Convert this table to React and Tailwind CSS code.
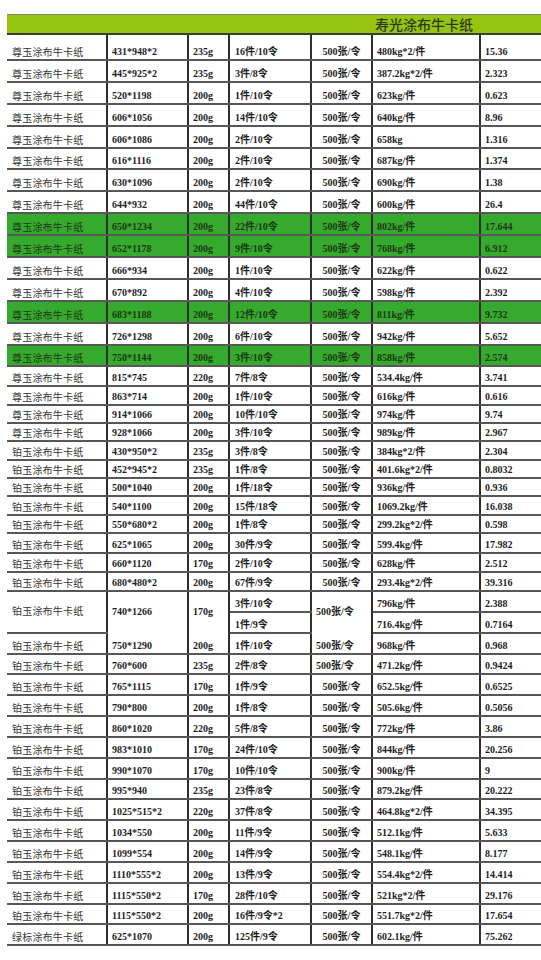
import React from "react";
import clsx from "clsx";

const A = "h-[21.9px]";
const B = "h-[18.3px]";
const C = "h-[20.84px]";

// name, size, gsm, count, kg, total, height, green
const top = [
  ["尊玉涂布牛卡纸", "431*948*2", "235g", "16件/10令", "480kg*2/件", "15.36", "h-[26px]"],
  ["尊玉涂布牛卡纸", "445*925*2", "235g", "3件/8令", "387.2kg*2/件", "2.323", A],
  ["尊玉涂布牛卡纸", "520*1198", "200g", "1件/10令", "623kg/件", "0.623", A],
  ["尊玉涂布牛卡纸", "606*1056", "200g", "14件/10令", "640kg/件", "8.96", A],
  ["尊玉涂布牛卡纸", "606*1086", "200g", "2件/10令", "658kg", "1.316", A],
  ["尊玉涂布牛卡纸", "616*1116", "200g", "2件/10令", "687kg/件", "1.374", A],
  ["尊玉涂布牛卡纸", "630*1096", "200g", "2件/10令", "690kg/件", "1.38", A],
  ["尊玉涂布牛卡纸", "644*932", "200g", "44件/10令", "600kg/件", "26.4", A],
  ["尊玉涂布牛卡纸", "650*1234", "200g", "22件/10令", "802kg/件", "17.644", A, true],
  ["尊玉涂布牛卡纸", "652*1178", "200g", "9件/10令", "768kg/件", "6.912", A, true],
  ["尊玉涂布牛卡纸", "666*934", "200g", "1件/10令", "622kg/件", "0.622", A],
  ["尊玉涂布牛卡纸", "670*892", "200g", "4件/10令", "598kg/件", "2.392", A],
  ["尊玉涂布牛卡纸", "683*1188", "200g", "12件/10令", "811kg/件", "9.732", A, true],
  ["尊玉涂布牛卡纸", "726*1298", "200g", "6件/10令", "942kg/件", "5.652", A],
  ["尊玉涂布牛卡纸", "750*1144", "200g", "3件/10令", "858kg/件", "2.574", A, true],
  ["尊玉涂布牛卡纸", "815*745", "220g", "7件/8令", "534.4kg/件", "3.741", "h-[20px]"],
  ["尊玉涂布牛卡纸", "863*714", "200g", "1件/10令", "616kg/件", "0.616", B],
  ["尊玉涂布牛卡纸", "914*1066", "200g", "10件/10令", "974kg/件", "9.74", B],
  ["尊玉涂布牛卡纸", "928*1066", "200g", "3件/10令", "989kg/件", "2.967", B],
  ["铂玉涂布牛卡纸", "430*950*2", "235g", "3件/8令", "384kg*2/件", "2.304", B],
  ["铂玉涂布牛卡纸", "452*945*2", "235g", "1件/8令", "401.6kg*2/件", "0.8032", B],
  ["铂玉涂布牛卡纸", "500*1040", "200g", "1件/18令", "936kg/件", "0.936", B],
  ["铂玉涂布牛卡纸", "540*1100", "200g", "15件/18令", "1069.2kg/件", "16.038", B],
  ["铂玉涂布牛卡纸", "550*680*2", "200g", "1件/8令", "299.2kg*2/件", "0.598", B],
  ["铂玉涂布牛卡纸", "625*1065", "200g", "30件/9令", "599.4kg/件", "17.982", "h-[20px]"],
  ["铂玉涂布牛卡纸", "660*1120", "170g", "2件/10令", "628kg/件", "2.512", "h-[19.3px]"],
  ["铂玉涂布牛卡纸", "680*480*2", "200g", "67件/9令", "293.4kg*2/件", "39.316", "h-[19px]"],
];

const bottom = [
  ["铂玉涂布牛卡纸", "760*600", "235g", "2件/8令", "471.2kg/件", "0.9424", C, false, true],
  ["铂玉涂布牛卡纸", "765*1115", "170g", "1件/9令", "652.5kg/件", "0.6525", C],
  ["铂玉涂布牛卡纸", "790*800", "200g", "1件/8令", "505.6kg/件", "0.5056", C],
  ["铂玉涂布牛卡纸", "860*1020", "220g", "5件/8令", "772kg/件", "3.86", C],
  ["铂玉涂布牛卡纸", "983*1010", "170g", "24件/10令", "844kg/件", "20.256", C],
  ["铂玉涂布牛卡纸", "990*1070", "170g", "10件/10令", "900kg/件", "9", C],
  ["铂玉涂布牛卡纸", "995*940", "235g", "23件/8令", "879.2kg/件", "20.222", C],
  ["铂玉涂布牛卡纸", "1025*515*2", "220g", "37件/8令", "464.8kg*2/件", "34.395", C],
  ["铂玉涂布牛卡纸", "1034*550", "200g", "11件/9令", "512.1kg/件", "5.633", C],
  ["铂玉涂布牛卡纸", "1099*554", "200g", "14件/9令", "548.1kg/件", "8.177", C],
  ["铂玉涂布牛卡纸", "1110*555*2", "200g", "13件/9令", "554.4kg*2/件", "14.414", C],
  ["铂玉涂布牛卡纸", "1115*550*2", "170g", "28件/10令", "521kg*2/件", "29.176", C],
  ["铂玉涂布牛卡纸", "1115*550*2", "200g", "16件/9令*2", "551.7kg*2/件", "17.654", C],
  ["绿标涂布牛卡纸", "625*1070", "200g", "125件/9令", "602.1kg/件", "75.262", C],
];

const cell = "p-0 pb-[1px] align-bottom leading-[12px] whitespace-nowrap overflow-hidden";
const hb = "border-b-2 border-b-[#575757]";
const vr = "border-r-2 border-r-[#2f2f2f]";
const cjk = "font-['Noto_Sans_CJK_SC',sans-serif] text-[10px] tracking-[0.2px] pl-[5px]";
const num = "font-['Liberation_Serif','Noto_Sans_CJK_SC',serif] font-bold text-[10px]";

function Row({ r }) {
  const [name, size, gsm, count, kg, total, h, green, leftReam] = r;
  return (
    <tr className={clsx(h, green ? "bg-[#36a92f] text-[#1c3a12]" : "text-[#1e1e1e]")}>
      <td className={clsx(cell, hb, vr, cjk, !green && "text-[#333]")}>{name}</td>
      <td className={clsx(cell, hb, vr, num, "pl-[4px]")}>{size}</td>
      <td className={clsx(cell, hb, vr, num, "pl-[4px]")}>{gsm}</td>
      <td className={clsx(cell, hb, vr, num, "pl-[5px]")}>{count}</td>
      <td className={clsx(cell, hb, vr, num, leftReam ? "pl-[4px]" : "text-center")}>500张/令</td>
      <td className={clsx(cell, hb, vr, num, "pl-[4px]")}>{kg}</td>
      <td className={clsx(cell, hb, num, "pl-[4px]")}>{total}</td>
    </tr>
  );
}

export default function App() {
  return (
    <div className="min-h-[960px] w-[541px] overflow-hidden bg-white pl-[7px] pt-[14px]">
      <table className="w-[534px] table-fixed border-collapse">
        <colgroup>
          <col className="w-[100px]" />
          <col className="w-[81px]" />
          <col className="w-[41px]" />
          <col className="w-[82px]" />
          <col className="w-[61px]" />
          <col className="w-[108px]" />
          <col className="w-[61px]" />
        </colgroup>
        <tbody>
          <tr className="h-[18px] bg-[#96c40f]">
            <td colSpan={5} className="border-t border-t-[#7d8a6a] border-b-2 border-b-[#3a3a3a] p-0"></td>
            <td
              colSpan={2}
              className="border-t border-t-[#7d8a6a] border-b-2 border-b-[#3a3a3a] p-0 pl-[3px] align-middle font-['Noto_Sans_CJK_SC',sans-serif] text-[14px] font-medium leading-[18px] text-[#2d3a1c] whitespace-nowrap"
            >
              寿光涂布牛卡纸
            </td>
          </tr>
          {top.map((r, i) => (
            <Row key={"t" + i} r={r} />
          ))}

          {/* merged block */}
          <tr className={clsx(C, "text-[#1e1e1e]")}>
            <td rowSpan={2} className={clsx(cell, hb, vr, cjk, "!align-middle text-[#333]")}>
              铂玉涂布牛卡纸
            </td>
            <td rowSpan={2} className={clsx(cell, vr, num, "!align-middle pl-[4px]")}>
              740*1266
            </td>
            <td rowSpan={2} className={clsx(cell, vr, num, "!align-middle pl-[4px]")}>
              170g
            </td>
            <td className={clsx(cell, hb, vr, num, "pl-[5px]")}>3件/10令</td>
            <td rowSpan={2} className={clsx(cell, vr, num, "!align-middle pl-[4px]")}>
              500张/令
            </td>
            <td className={clsx(cell, hb, vr, num, "pl-[4px]")}>796kg/件</td>
            <td className={clsx(cell, hb, num, "pl-[4px]")}>2.388</td>
          </tr>
          <tr className={clsx(C, "text-[#1e1e1e]")}>
            <td className={clsx(cell, hb, vr, num, "pl-[5px]")}>1件/9令</td>
            <td className={clsx(cell, hb, vr, num, "pl-[4px]")}>716.4kg/件</td>
            <td className={clsx(cell, hb, num, "pl-[4px]")}>0.7164</td>
          </tr>
          <tr className={clsx(C, "text-[#1e1e1e]")}>
            <td className={clsx(cell, hb, vr, cjk, "text-[#333]")}>铂玉涂布牛卡纸</td>
            <td className={clsx(cell, hb, vr, num, "pl-[4px]")}>750*1290</td>
            <td className={clsx(cell, hb, vr, num, "pl-[4px]")}>200g</td>
            <td className={clsx(cell, hb, vr, num, "pl-[5px]")}>1件/10令</td>
            <td className={clsx(cell, hb, vr, num, "pl-[4px]")}>500张/令</td>
            <td className={clsx(cell, hb, vr, num, "pl-[4px]")}>968kg/件</td>
            <td className={clsx(cell, hb, num, "pl-[4px]")}>0.968</td>
          </tr>

          {bottom.map((r, i) => (
            <Row key={"b" + i} r={r} />
          ))}
        </tbody>
      </table>
    </div>
  );
}
